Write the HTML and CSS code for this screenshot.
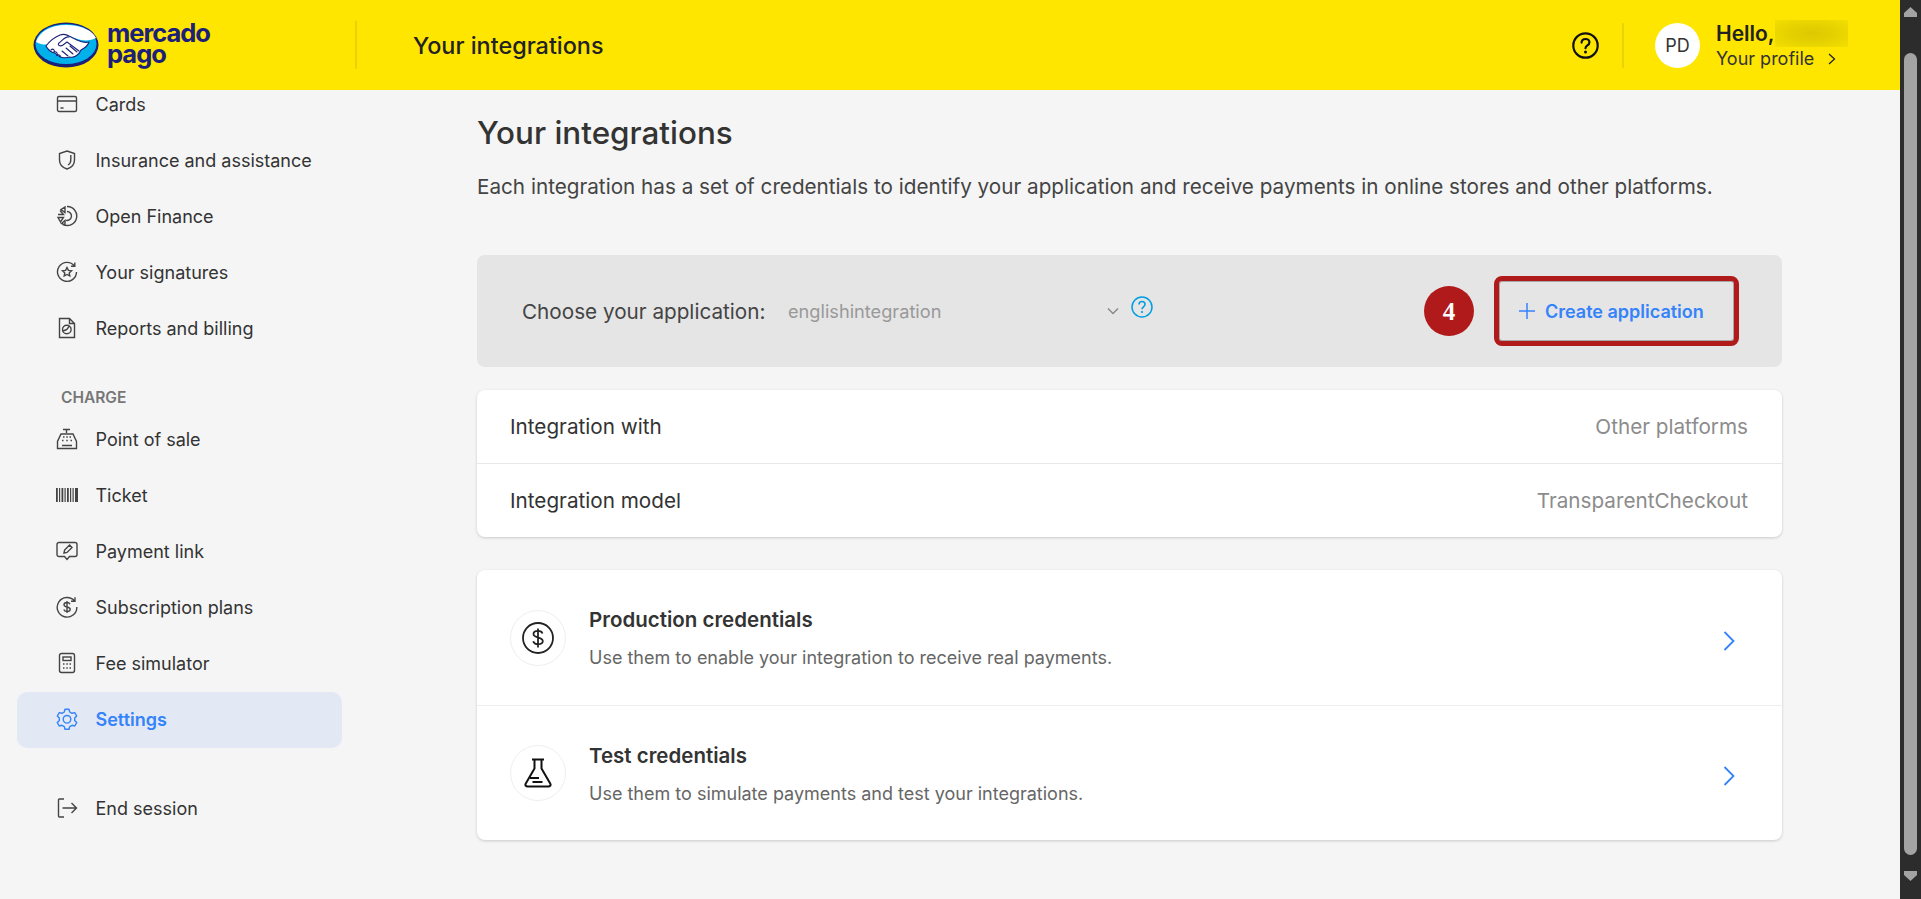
FILE: index.html
```html
<!DOCTYPE html>
<html lang="en">
<head>
<meta charset="utf-8">
<title>Your integrations</title>
<link rel="stylesheet" href="styles.css">
</head>
<body>
<div class="window">
  <div class="app">
    <header class="topbar">
      <div class="brand">
        <svg class="logo-mark" viewBox="0 0 66 46" width="66" height="46">
          <ellipse cx="33" cy="23" rx="32.500" ry="22.500" fill="#1b2079"/>
          <ellipse cx="33" cy="22" rx="30.500" ry="20" fill="#00b1ea"/>
          <path d="M3 20c8 4 14 3 19-1 5-3 8-5 12-5s9 3 14 4c6 1 11 0 15-2-3-7-14-13-30-13S6 10 3 20z" fill="#fff"/>
          <path d="M13 24c3-4 9-9 14-11 3-1 6-1 9 1l8 4c4 2 8 3 12 2-1 3-4 6-8 8-2 5-7 8-11 7-6 2-12 0-15-4-3 0-7-3-9-7z" fill="#fff" stroke="#1b2079" stroke-width="1.100" stroke-linejoin="round"/>
          <path d="M36 15c-4-1-7 4-10 6-2 2 1 4 4 2l4-3 12 9M37 24l7 6M33 26l7 6M29 29l6 5M18 28c2-2 4 0 3 2 2-1 4 1 3 3 2-1 4 1 3 2" fill="none" stroke="#1b2079" stroke-width="1.100" stroke-linecap="round"/>
        </svg>
        <div class="wordmark"><span>mercado</span><span>pago</span></div>
      </div>
      <div class="bar-rule"></div>
      <div class="top-title">Your integrations</div>
      <div class="top-right">
        <svg class="top-help" viewBox="0 0 27 27" width="27" height="27">
          <circle cx="13.500" cy="13.500" r="12.200" fill="none" stroke="#111" stroke-width="2.200"/>
          <path d="M9.600 10.600c0-2.300 1.700-3.600 3.900-3.600s3.900 1.300 3.900 3.400c0 3-3.900 3-3.900 5.800" fill="none" stroke="#111" stroke-width="2.200" stroke-linecap="round"/>
          <circle cx="13.500" cy="20" r="1.500" fill="#111"/>
        </svg>
        <div class="bar-rule rule-user"></div>
        <div class="avatar">PD</div>
        <div class="user">
          <div class="hello"><span>Hello,</span><span class="blur"></span></div>
          <div class="profile"><span>Your profile</span>
            <svg viewBox="0 0 8 12" width="8" height="12"><path d="M1 1l5.500 5L1 11" fill="none" stroke="#222" stroke-width="1.300"/></svg>
          </div>
        </div>
      </div>
    </header>

    <div class="body-row">
      <aside class="sidebar">
        <a class="nav-item"><svg class="ico" viewBox="0 0 22 22"><rect x="1.500" y="3.500" width="19" height="15" rx="1.500"/><path d="M1.500 8h19M4.500 15h3"/></svg><span>Cards</span></a>
        <a class="nav-item"><svg class="ico" viewBox="0 0 22 22"><path d="M11 2l7.500 2.500v6.500c0 4.500-3.500 7.800-7.500 9-4-1.200-7.500-4.500-7.500-9V4.500z"/><path d="M14.800 6v5c0 2.200-1 4-2.800 5"/></svg><span>Insurance and assistance</span></a>
        <a class="nav-item"><svg class="ico" viewBox="0 0 22 22"><path d="M11 1.500a9.500 9.500 0 1 1-4 18M11 6.500a4.500 4.500 0 1 1-1 8.900M9 2v5.500L5 4.500zM2 9.500h5.500L4 5.500M2 12.500h5.500L4.500 17zM9 15.500V20l-3.500-1.500z"/></svg><span>Open Finance</span></a>
        <a class="nav-item"><svg class="ico" viewBox="0 0 22 22"><path d="M18.500 5A9.500 9.500 0 1 0 20.500 11M18.800 1.500V5.300H15"/><path d="M11 6.500l1.400 2.900 3.100.4-2.300 2.100.6 3.100-2.800-1.500-2.800 1.500.6-3.100-2.300-2.100 3.100-.4z"/></svg><span>Your signatures</span></a>
        <a class="nav-item"><svg class="ico" viewBox="0 0 22 22"><path d="M3.500 1.500h10l5 5v14h-15zM13.500 1.500v5h5"/><circle cx="10.800" cy="12.500" r="4.300"/><path d="M10.800 12.500l2.500-3.400M10.800 12.500l-3.800 1.500"/></svg><span>Reports and billing</span></a>

        <div class="nav-heading">CHARGE</div>
        <a class="nav-item"><svg class="ico" viewBox="0 0 22 22"><path d="M7 1.500h7M10.500 1.500v3.500M5 6h12l3.500 7.500V20.500H1.500V13.500z"/><path d="M6 17.500h10M7 9h1.500M10.300 9h1.500M13.500 9H15M6 12.500h1.500M10.300 12.500h1.500M14.500 12.500H16"/></svg><span>Point of sale</span></a>
        <a class="nav-item"><svg class="ico bars" viewBox="0 0 22 22"><path d="M0 4h1.800v14H0zM3 4h1.200v14H3zM5.500 4h1.800v14H5.500zM8.500 4h1.200v14H8.500zM11 4h1.800v14H11zM14 4h1.200v14H14zM16.500 4h1.200v14h-1.200zM19 4h3v14h-3z"/></svg><span>Ticket</span></a>
        <a class="nav-item"><svg class="ico" viewBox="0 0 22 22"><path d="M3 2.500h16a2 2 0 0 1 2 2v10a2 2 0 0 1-2 2h-5.500L11 19.500l-2.500-3H3a2 2 0 0 1-2-2v-10a2 2 0 0 1 2-2z"/><path d="M8 13l.6-3 5-5 2.400 2.400-5 5z"/></svg><span>Payment link</span></a>
        <a class="nav-item"><svg class="ico" viewBox="0 0 22 22"><path d="M18.500 5A9.800 9.800 0 1 0 20.800 11M19 1.300V5.300H15"/><path d="M14 8.200c-.5-1.200-1.600-1.700-3-1.700-1.600 0-3 .8-3 2.200 0 3.200 6.200 1.500 6.200 4.600 0 1.400-1.400 2.200-3.200 2.200-1.500 0-2.800-.7-3.200-2M11 5v12"/></svg><span>Subscription plans</span></a>
        <a class="nav-item"><svg class="ico" viewBox="0 0 22 22"><rect x="3.500" y="1.500" width="15" height="19" rx="2"/><rect x="7" y="5" width="8" height="3.500"/><path d="M7 12h1.500M10.300 12h1.500M13.500 12H15M7 16h1.500M10.300 16h1.500M13.500 16H15"/></svg><span>Fee simulator</span></a>
        <a class="nav-item active"><svg class="ico" viewBox="0 0 22 22"><path d="M9 1.300h4l.7 2.700 2.300 1.300 2.700-.7 2 3.400-2 2v2.600l2 2-2 3.400-2.700-.7-2.300 1.300-.7 2.700H9l-.7-2.700L6 17.300l-2.700.7-2-3.400 2-2V10l-2-2 2-3.400L6 5.300 8.300 4z" stroke-linejoin="round"/><circle cx="11" cy="11.300" r="3.800"/></svg><span>Settings</span></a>

        <a class="nav-item end"><svg class="ico" viewBox="0 0 22 22"><path d="M8 2H3.500a1 1 0 0 0-1 1v16a1 1 0 0 0 1 1H8M6.500 11h14M15.500 6l5 5-5 5"/></svg><span>End session</span></a>
      </aside>

      <main class="content">
        <h1 class="page-title">Your integrations</h1>
        <p class="page-desc">Each integration has a set of credentials to identify your application and receive payments in online stores and other platforms.</p>

        <section class="chooser">
          <span class="choose-label">Choose your application:</span>
          <div class="select"><span>englishintegration</span>
            <svg viewBox="0 0 12 8" width="12" height="8"><path d="M1 1.500l5 5 5-5" fill="none" stroke="#8a8a8a" stroke-width="1.500"/></svg>
          </div>
          <svg class="help" viewBox="0 0 22 22" width="22" height="22"><circle cx="11" cy="11" r="10" fill="none" stroke="#009ee3" stroke-width="1.500"/><path d="M8 8.500C8 6.500 9.300 5.500 11 5.500s3 1 3 2.800c0 2.500-3 2.500-3 5" fill="none" stroke="#009ee3" stroke-width="1.600"/><circle cx="11" cy="16" r="1.100" fill="#009ee3"/></svg>
          <div class="step">4</div>
          <button class="create"><svg viewBox="0 0 18 18" width="18" height="18"><path d="M9 1v16M1 9h16" stroke="#3483fa" stroke-width="1.500"/></svg><span>Create application</span></button>
        </section>

        <section class="card">
          <div class="info-row"><span>Integration with</span><span class="info-val">Other platforms</span></div>
          <div class="info-row"><span>Integration model</span><span class="info-val">TransparentCheckout</span></div>
        </section>

        <section class="card creds">
          <div class="cred-row">
            <div class="cred-icon"><svg viewBox="0 0 32 32" width="32" height="32"><circle cx="16" cy="16" r="15" fill="none" stroke="#222" stroke-width="1.800"/><path d="M20.500 11.500c-.6-1.800-2.400-2.700-4.500-2.700-2.500 0-4.500 1.200-4.500 3.300 0 4.700 9.300 2.300 9.300 7 0 2-2.100 3.200-4.800 3.200-2.300 0-4.200-1-4.800-3M16 6.500v19" fill="none" stroke="#222" stroke-width="1.800"/></svg></div>
            <div class="cred-text"><div class="cred-title">Production credentials</div><div class="cred-sub">Use them to enable your integration to receive real payments.</div></div>
            <svg class="cred-go" viewBox="0 0 12 20" width="12" height="20"><path d="M1.500 1l9 9-9 9" fill="none" stroke="#3483fa" stroke-width="1.800"/></svg>
          </div>
          <div class="cred-row">
            <div class="cred-icon"><svg viewBox="0 0 28 30" width="28" height="30"><path d="M8 1.500h12M10.500 1.500v9L1.800 25.500c-1 1.700 0 3 2 3h20.400c2 0 3-1.300 2-3L17.500 10.500v-9M6 20h9M8.500 24h10" fill="none" stroke="#111" stroke-width="2"/></svg></div>
            <div class="cred-text"><div class="cred-title">Test credentials</div><div class="cred-sub">Use them to simulate payments and test your integrations.</div></div>
            <svg class="cred-go" viewBox="0 0 12 20" width="12" height="20"><path d="M1.500 1l9 9-9 9" fill="none" stroke="#3483fa" stroke-width="1.800"/></svg>
          </div>
        </section>
      </main>
    </div>
  </div>

  <div class="scrollbar">
    <svg viewBox="0 0 13 10" width="13" height="10"><path d="M6.500 0L13 6v4H0V6z" fill="#a3a3a3"/></svg>
    <div class="thumb"></div>
    <svg viewBox="0 0 13 10" width="13" height="10"><path d="M6.500 10L13 4V0H0v4z" fill="#a3a3a3"/></svg>
  </div>
</div>
</body>
</html>
```
FILE: styles.css
```css
* { box-sizing: border-box; }
html, body { margin: 0; height: 100%; overflow: hidden; }
body { font-family: Inter, "Open Sans", sans-serif; color: #333; background: #f5f5f5; }

.window { display: flex; height: 899px; }
.app { flex: 1; min-width: 0; display: flex; flex-direction: column; overflow: hidden; }

.topbar { height: 90px; flex: none; background: #ffe600; display: flex; align-items: center; position: relative; z-index: 2; padding-left: 33px; }
.brand { display: flex; align-items: center; width: 322px; gap: 8px; }
.logo-mark { flex: none; }
.wordmark { display: flex; flex-direction: column; color: #1b2079; font-family: Inter, sans-serif; font-weight: 700; font-size: 25.500px; line-height: 21px; letter-spacing: -1px; margin-top: -4px; }
.bar-rule { width: 2px; height: 48px; background: #e9d300; flex: none; }
.top-title { margin-left: 56px; padding-top: 1px; font-size: 23.400px; font-weight: 500; color: #222; }
.top-right { margin-left: auto; display: flex; align-items: center; width: 328px; }
.top-help { flex: none; }
.rule-user { margin-left: 23px; height: 45px; }
.avatar { width: 45px; height: 45px; border-radius: 50%; background: #fff; margin-left: 31px; display: flex; align-items: center; justify-content: center; font-size: 18px; color: #333; flex: none; }
.user { margin-left: 16px; padding-top: 1px; }
.hello { display: flex; align-items: center; font-size: 21px; font-weight: 600; color: #222; height: 27px; line-height: 27px; }
.blur { width: 73px; height: 27px; margin-left: 0; background: radial-gradient(ellipse at 50% 50%, #dcc800 0%, #e6d200 50%, #f4df00 100%); }
.profile { display: flex; align-items: center; font-size: 18px; color: #333; line-height: 24px; height: 24px; gap: 14px; }

.body-row { display: flex; flex: 1; min-height: 0; }

.sidebar { width: 477px; flex: none; padding-left: 17px; margin-top: -13px; }
.nav-item { display: flex; align-items: center; gap: 17.500px; width: 325px; height: 56px; padding: 0 0 2px 39px; font-size: 18px; color: #333; border-radius: 10px; }
.ico { width: 22px; height: 22px; flex: none; fill: none; stroke: #444; stroke-width: 1.400; }
.bars { fill: #444; stroke: none; }
.nav-heading { height: 55px; padding: 31px 0 0 44px; font-size: 15.500px; line-height: 20px; font-weight: 600; color: #777; }
.nav-item.active { background: #e3e9f4; color: #3483fa; font-weight: 600; }
.nav-item.active .ico { stroke: #3483fa; }
.nav-item.end { margin-top: 33px; }

.content { width: 1305px; flex: none; padding-top: 25px; }
.page-title { margin: 0; font-size: 31.400px; line-height: 36px; font-weight: 500; color: #333; }
.page-desc { margin: 24px 0 56px; font-size: 20.700px; line-height: 24px; color: #444; }

.chooser { height: 112px; background: #e5e5e5; border-radius: 8px; display: flex; align-items: center; padding: 0 43px 0 45px; }
.choose-label { width: 266px; flex: none; font-size: 20.700px; color: #444; }
.select { width: 331px; flex: none; display: flex; align-items: center; justify-content: space-between; font-size: 18.200px; color: #999; }
.help { margin: -8px 0 0 12px; flex: none; }
.step { margin-left: auto; width: 50px; height: 50px; padding-top: 2px; border-radius: 50%; background: #b01a1a; color: #fff; display: flex; align-items: center; justify-content: center; font-family: "Liberation Serif", serif; font-weight: 700; font-size: 25px; flex: none; }
.create { margin-left: 20px; width: 245px; height: 70px; border: 5px solid #b01a1a; border-radius: 8px; background: transparent; box-shadow: inset 0 0 0 1px #a8a8a8; display: flex; align-items: center; gap: 9px; padding: 0 0 0 19px; font: 600 18px Inter, sans-serif; color: #3483fa; }

.card { background: #fff; border-radius: 8px; box-shadow: 0 1px 3px rgba(0,0,0,.18); margin-top: 23px; overflow: hidden; }
.info-row { height: 73px; padding: 0 34px 0 33px; display: flex; align-items: center; justify-content: space-between; font-size: 20.700px; color: #333; }
.info-row + .info-row { border-top: 1px solid #e8e8e8; height: 74px; }
.info-val { color: #8c8c8c; }

.creds { margin-top: 33px; }
.cred-row { height: 135px; display: flex; align-items: center; padding: 0 47px 0 33px; }
.cred-row + .cred-row { border-top: 1px solid #ededed; }
.cred-icon { width: 56px; height: 56px; border-radius: 50%; border: 1px solid #eee; display: flex; align-items: center; justify-content: center; flex: none; }
.cred-text { margin-left: 23px; flex: 1; padding-top: 3px; }
.cred-title { font-size: 20.500px; line-height: 24px; font-weight: 600; color: #333; }
.cred-sub { font-size: 18px; line-height: 24px; color: #666; margin-top: 14px; }
.cred-go { flex: none; margin-top: 6px; }

.scrollbar { width: 21px; flex: none; background: #2c2c2c; display: flex; flex-direction: column; align-items: center; padding: 7px 0; }
.thumb { width: 13px; height: 802px; margin: 36px 0 16px; border-radius: 7px; background: #a3a3a3; }
```
